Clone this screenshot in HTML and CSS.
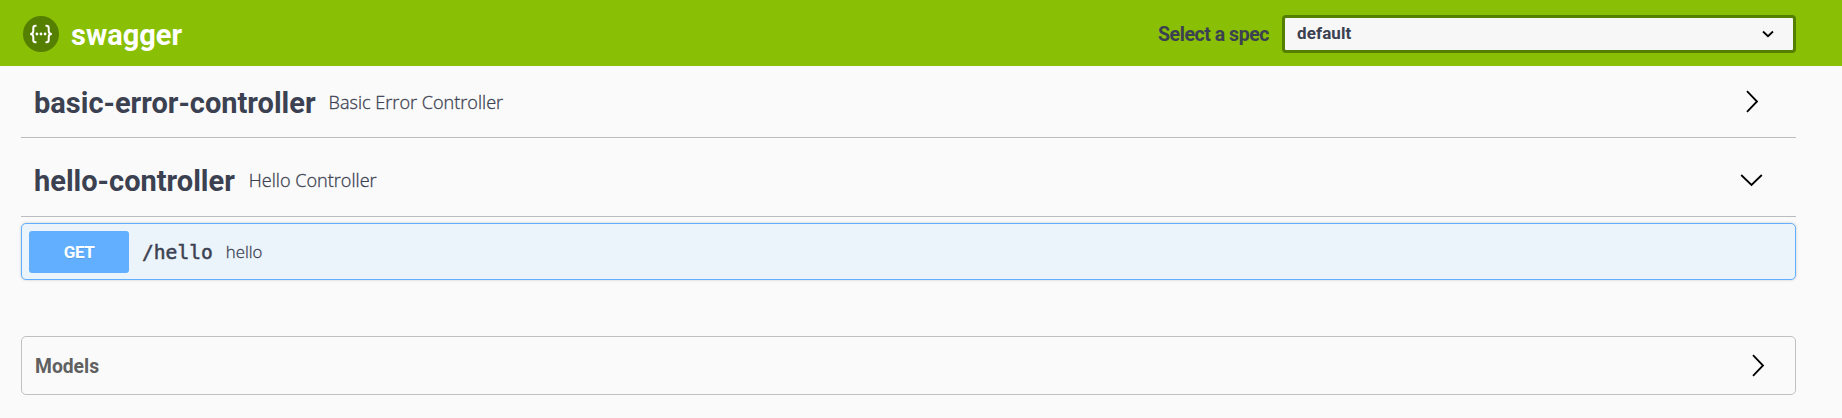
FILE: index.html
```
<!DOCTYPE html>
<html lang="en">
<head>
<meta charset="utf-8">
<title>Swagger UI</title>
<link rel="stylesheet" href="styles.css">
</head>
<body>
<header class="topbar">
  <a class="logo">
    <svg class="logo-mark" viewBox="0 0 36 36" width="36" height="36">
      <circle cx="18" cy="18" r="18" fill="#547f00"/>
      <g fill="none" stroke="#fff" stroke-width="2">
        <path d="M13.5 9.8H12.5Q10.3 9.8 10.3 12V15Q10.3 18 7.2 18Q10.3 18 10.3 21V24Q10.3 26.2 12.5 26.2H13.5"/>
        <path d="M22.5 9.8H23.5Q25.7 9.8 25.7 12V15Q25.7 18 28.8 18Q25.7 18 25.7 21V24Q25.7 26.2 23.5 26.2H22.5"/>
      </g>
      <g fill="#fff"><circle cx="13.9" cy="18" r="1.4"/><circle cx="18" cy="18" r="1.4"/><circle cx="22.1" cy="18" r="1.4"/></g>
    </svg>
    <span class="logo-text">swagger</span>
  </a>
  <div class="spec">
    <span class="spec-label">Select a spec</span>
    <div class="select">
      <span class="select-value">default</span>
      <svg width="14" height="10" viewBox="0 0 14 10"><path d="M2 2.5L7 7.2L12 2.5" fill="none" stroke="#000" stroke-width="1.8"/></svg>
    </div>
  </div>
</header>
<main class="content">
  <section class="tag">
    <h3 class="tag-name">basic-error-controller</h3>
    <span class="tag-desc">Basic Error Controller</span>
    <svg class="arrow" width="24" height="24" viewBox="0 0 24 24"><path d="M7 1.2L17 11.5L7 21.8"/></svg>
  </section>
  <section class="tag tag-open">
    <h3 class="tag-name">hello-controller</h3>
    <span class="tag-desc">Hello Controller</span>
    <svg class="arrow" width="24" height="24" viewBox="0 0 24 24"><path d="M1.2 7L11.5 17L21.8 7"/></svg>
  </section>
  <div class="operation">
    <span class="method">GET</span>
    <span class="path">/hello</span>
    <span class="summary">hello</span>
  </div>
  <section class="models">
    <h4 class="models-title">Models</h4>
    <svg class="arrow" width="24" height="24" viewBox="0 0 24 24"><path d="M7 1.2L17 11.5L7 21.8"/></svg>
  </section>
</main>
</body>
</html>
```
FILE: styles.css
```
* { box-sizing: border-box; }
body {
  margin: 0;
  background: #fafafa;
  color: #3b4151;
  font-family: "Open Sans", sans-serif;
}
.topbar {
  height: 66px;
  padding: 0 46px 0 23px;
  display: flex;
  justify-content: space-between;
  align-items: flex-start;
  background: #89bf04;
  font-family: Roboto, sans-serif;
  font-weight: 700;
}
.logo { display: flex; align-items: center; gap: 12px; padding-top: 16px; height: 52px; }
.logo-mark { display: block; }
.logo-text { color: #fff; font-size: 29px; line-height: 36px; padding-top: 1px; }
.spec { display: flex; align-items: center; gap: 13px; padding-top: 14px; }
.spec-label { font-size: 19.5px; letter-spacing: -.45px; line-height: 38px; padding-top: 2px; }
.select {
  width: 514px;
  height: 38px;
  padding: 0 18px 0 12px;
  display: flex;
  align-items: center;
  justify-content: space-between;
  border: 3px solid #547f00;
  border-radius: 4px;
  background: #f7f7f7;
  font-size: 17px;
}
.select-value { padding-bottom: 2px; letter-spacing: .1px; }
.content { padding: 0 46px 0 21px; }
.tag {
  height: 72px;
  padding: 0 32px 0 13px;
  display: flex;
  align-items: center;
  border-bottom: 1px solid #bbbcbf;
}
.tag-open { height: 79px; padding-top: 6px; }
.tag-name { margin: 0; padding-top: 2px; font: 700 29px/36px Roboto, sans-serif; }
.tag-desc {
  margin-left: 13px;
  font-size: 18.1px;
  font-weight: 300;
  -webkit-text-stroke: .3px #3b4151;
}
.tag-open .tag-desc { margin-left: 14px; }
.arrow { margin-left: auto; fill: none; stroke: #000; stroke-width: 1.8; }
.operation {
  height: 57px;
  margin-top: 6px;
  padding: 0 7px;
  display: flex;
  align-items: center;
  border: 1px solid #61affe;
  border-radius: 5px;
  background: #ebf3fb;
  box-shadow: 0 0 3px rgba(0, 0, 0, .19);
}
.method {
  width: 100px;
  height: 42px;
  border-radius: 3px;
  background: #61affe;
  color: #fff;
  text-align: center;
  font: 700 17px/42px Roboto, sans-serif;
  letter-spacing: -.5px;
  text-shadow: 0 1px 0 rgba(0, 0, 0, .1);
}
.path {
  margin-left: 13px;
  padding-top: 2px;
  font: 400 19.6px "DejaVu Sans Mono", monospace;
  -webkit-text-stroke: .5px #3b4151;
}
.summary {
  margin-left: 13px;
  font-size: 16.8px;
  font-weight: 300;
  -webkit-text-stroke: .3px #3b4151;
}
.models {
  height: 59px;
  margin-top: 56px;
  padding: 0 25px 0 13px;
  display: flex;
  align-items: center;
  border: 1px solid #bfc0c4;
  border-radius: 5px;
}
.models-title { margin: 0; padding-top: 2px; color: #606060; font: 700 19.3px/24px Roboto, sans-serif; }
```
